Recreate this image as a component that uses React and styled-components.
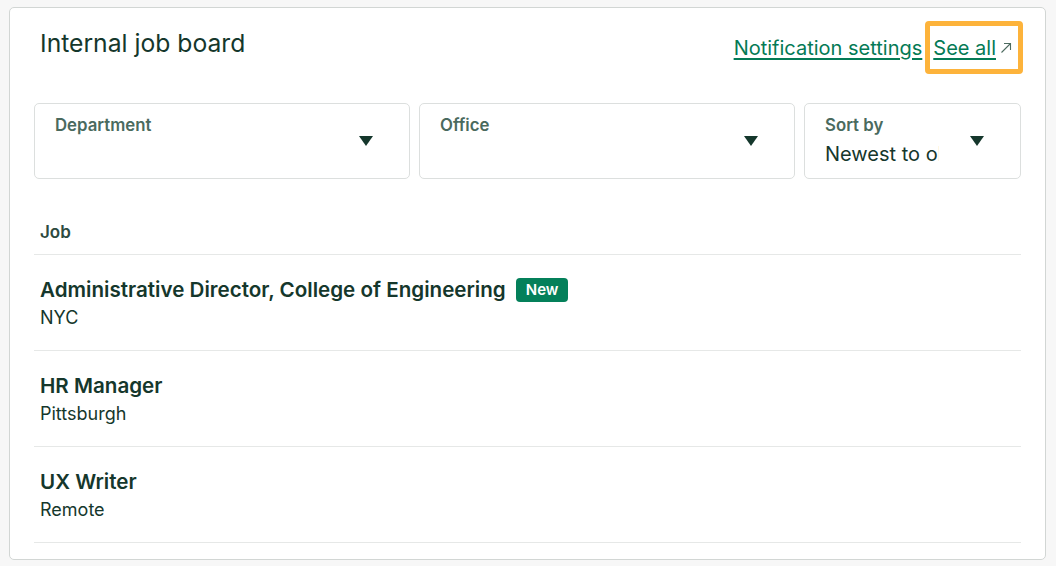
import styled, { createGlobalStyle } from "styled-components";

const GlobalStyle = createGlobalStyle`
  body {
    margin: 0;
    background: #f7f7f7;
    font-family: Inter, "Noto Sans", sans-serif;
    color: #15372c;
  }
`;

const jobs = [
  { title: "Administrative Director, College of Engineering", location: "NYC", isNew: true },
  { title: "HR Manager", location: "Pittsburgh" },
  { title: "UX Writer", location: "Remote" },
];

const filters = [
  { label: "Department" },
  { label: "Office" },
  { label: "Sort by", value: "Newest to oldest" },
];

const App = () => {
  return (
    <>
      <GlobalStyle />
      <Card>
        <Header>
          <Title>Internal job board</Title>
          <Links>
            <Link href="#">Notification settings</Link>
            <Highlight>
              <Link href="#">See all</Link>
              <Arrow viewBox="0 0 12 12">
                <path d="M1.5 10.5 L10.5 1.5 M4 1.5 H10.5 V8" fill="none" stroke="#4d6b60" strokeWidth="1.1" />
              </Arrow>
            </Highlight>
          </Links>
        </Header>

        <Filters>
          {filters.map((f) => (
            <Select key={f.label}>
              <SelectText>
                <SelectLabel>{f.label}</SelectLabel>
                <SelectValue>{f.value}</SelectValue>
              </SelectText>
              <Caret />
            </Select>
          ))}
        </Filters>

        <ColumnHead>Job</ColumnHead>
        {jobs.map((job) => (
          <JobRow key={job.title}>
            <JobTitle>
              {job.title}
              {job.isNew && <Badge>New</Badge>}
            </JobTitle>
            <JobLocation>{job.location}</JobLocation>
          </JobRow>
        ))}
      </Card>
    </>
  );
};

const Card = styled.div`
  box-sizing: border-box;
  margin: 7px 10px 0 9px;
  height: 553px;
  background: #fff;
  border: 1px solid #d2d6d4;
  border-radius: 5px;
  padding: 13px 24px 0;
`;

const Header = styled.div`
  display: flex;
  justify-content: space-between;
  align-items: flex-start;
`;

const Title = styled.h1`
  margin: 5px 0 0 6px;
  font-size: 24.7px;
  line-height: 34px;
  font-weight: 400;
  color: #15372c;
`;

const Links = styled.div`
  display: flex;
  align-items: center;
  gap: 3px;
  margin-right: -2px;
`;

const Link = styled.a`
  font-size: 20px;
  line-height: 24px;
  color: #047a55;
  text-decoration: underline;
  text-underline-offset: 3px;
  text-decoration-thickness: 1.5px;
`;

const Highlight = styled.div`
  display: flex;
  align-items: center;
  gap: 4px;
  height: 43px;
  padding: 0 6px 0 3px;
  border: 5px solid #fdb33b;
  border-radius: 4px;
`;

const Arrow = styled.svg`
  width: 12px;
  height: 12px;
  margin-top: 1px;
`;

const Filters = styled.div`
  display: grid;
  grid-template-columns: 1fr 1fr 217px;
  gap: 9px;
  margin-top: 29px;
`;

const Select = styled.div`
  box-sizing: border-box;
  height: 76px;
  display: flex;
  align-items: center;
  padding: 0 36px 0 20px;
  border: 1px solid #dcdfde;
  border-radius: 5px;
`;

const SelectText = styled.div`
  flex: 1;
  min-width: 0;
  align-self: flex-start;
  padding-top: 11px;
`;

const SelectLabel = styled.div`
  font-size: 16.8px;
  line-height: 20px;
  font-weight: 600;
  color: #4a6a5e;
`;

const SelectValue = styled.div`
  margin-top: 6px;
  min-height: 26px;
  width: 114px;
  overflow: hidden;
  white-space: nowrap;
  font-size: 20px;
  line-height: 26px;
  color: #15372c;
`;

const Caret = styled.span`
  flex-shrink: 0;
  width: 0;
  height: 0;
  border-left: 7px solid transparent;
  border-right: 7px solid transparent;
  border-top: 10px solid #15372c;
`;

const ColumnHead = styled.div`
  margin-top: 43px;
  padding: 0 6px 12px;
  font-size: 17px;
  line-height: 20px;
  font-weight: 600;
  color: #2d4a40;
  border-bottom: 1px solid #e6e8e7;
`;

const JobRow = styled.div`
  box-sizing: border-box;
  height: 96px;
  padding: 21px 6px 0;
  border-bottom: 1px solid #e6e8e7;
`;

const JobTitle = styled.div`
  display: flex;
  align-items: center;
  gap: 10px;
  font-size: 20.6px;
  line-height: 28px;
  font-weight: 600;
  color: #15372c;
`;

const Badge = styled.span`
  display: inline-flex;
  align-items: center;
  height: 24px;
  padding: 0 10px;
  border-radius: 4px;
  background: #04805a;
  color: #fff;
  font-size: 15px;
  font-weight: 600;
`;

const JobLocation = styled.div`
  font-size: 18px;
  line-height: 28px;
  color: #15372c;
`;

export default App;
